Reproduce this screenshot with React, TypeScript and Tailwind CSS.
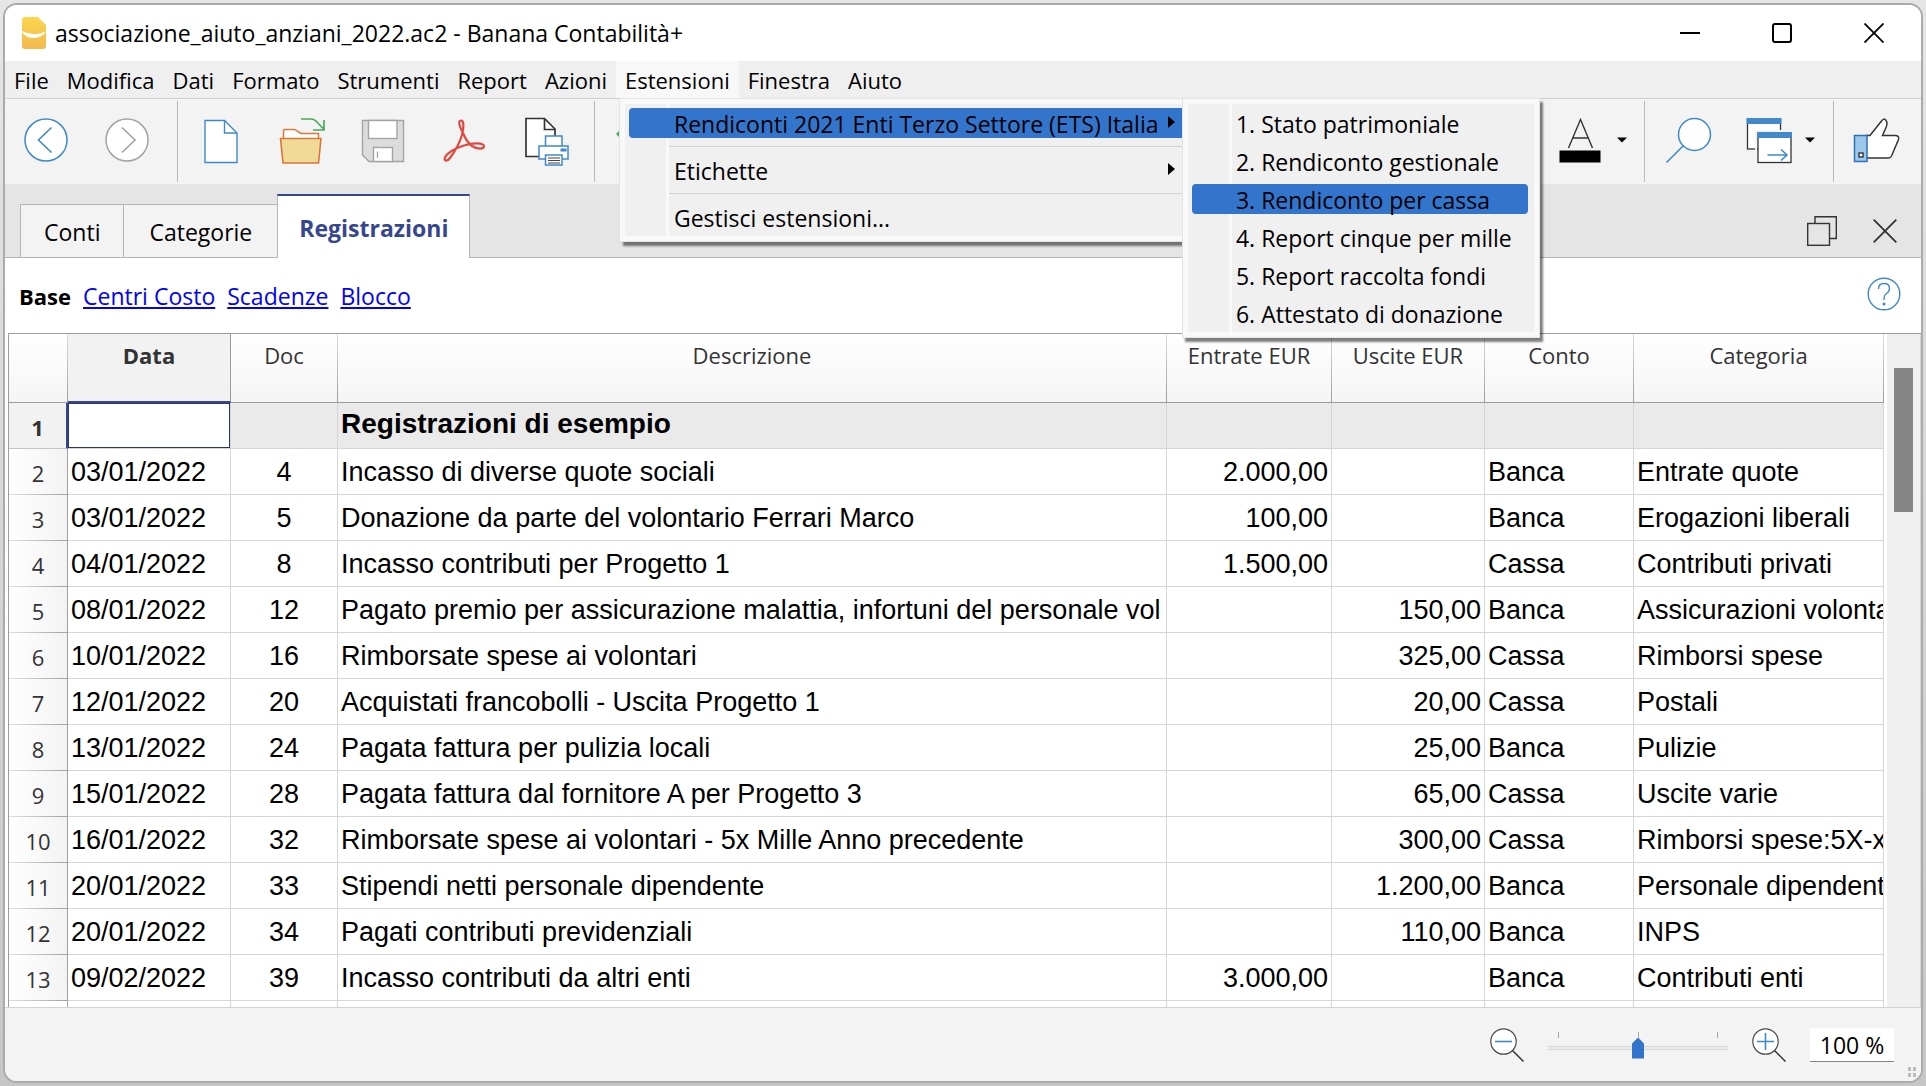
import React from "react";

const MENUS_BEFORE = ["File", "Modifica", "Dati", "Formato", "Strumenti", "Report", "Azioni"];
const MENUS_AFTER = ["Finestra", "Aiuto"];
const REPORTS = [
  "1. Stato patrimoniale",
  "2. Rendiconto gestionale",
  "3. Rendiconto per cassa",
  "4. Report cinque per mille",
  "5. Report raccolta fondi",
  "6. Attestato di donazione",
];

type Row = [string, string, string, string, string, string, string];
const ROWS: Row[] = [
  ["03/01/2022", "4", "Incasso di diverse quote sociali", "2.000,00", "", "Banca", "Entrate quote"],
  ["03/01/2022", "5", "Donazione da parte del volontario Ferrari Marco", "100,00", "", "Banca", "Erogazioni liberali"],
  ["04/01/2022", "8", "Incasso contributi per Progetto 1", "1.500,00", "", "Cassa", "Contributi privati"],
  ["08/01/2022", "12", "Pagato premio per assicurazione malattia, infortuni del personale vol", "", "150,00", "Banca", "Assicurazioni volonta"],
  ["10/01/2022", "16", "Rimborsate spese ai volontari", "", "325,00", "Cassa", "Rimborsi spese"],
  ["12/01/2022", "20", "Acquistati francobolli - Uscita Progetto 1", "", "20,00", "Cassa", "Postali"],
  ["13/01/2022", "24", "Pagata fattura per pulizia locali", "", "25,00", "Banca", "Pulizie"],
  ["15/01/2022", "28", "Pagata fattura dal fornitore A per Progetto 3", "", "65,00", "Cassa", "Uscite varie"],
  ["16/01/2022", "32", "Rimborsate spese ai volontari - 5x Mille Anno precedente", "", "300,00", "Cassa", "Rimborsi spese:5X-x"],
  ["20/01/2022", "33", "Stipendi netti personale dipendente", "", "1.200,00", "Banca", "Personale dipendent"],
  ["20/01/2022", "34", "Pagati contributi previdenziali", "", "110,00", "Banca", "INPS"],
  ["09/02/2022", "39", "Incasso contributi da altri enti", "3.000,00", "", "Banca", "Contributi enti"],
];

const ALIGN = ["text-left", "text-center", "text-left", "text-right", "text-right", "text-left", "text-left"];

function Caret() {
  return (
    <svg width="10" height="6" viewBox="0 0 10 6" aria-hidden="true">
      <path d="M0 0.5H10L5 5.5Z" fill="#000" />
    </svg>
  );
}

function ToolButton({ label, caret, children }: { label: string; caret?: boolean; children: React.ReactNode }) {
  return (
    <button type="button" aria-label={label} className="flex items-center gap-[14px] pb-[3px]">
      <svg width="44" height="44" viewBox="0 0 44 44" fill="none" className="shrink-0 overflow-visible">
        {children}
      </svg>
      {caret && <Caret />}
    </button>
  );
}

function TitleBar() {
  return (
    <header className="flex h-14 shrink-0 items-center bg-white pr-px pl-[17px]">
      <svg width="24" height="32" viewBox="0 0 24 32" className="shrink-0" aria-hidden="true">
        <defs>
          <linearGradient id="doc" x1="0" y1="0" x2="0" y2="1">
            <stop offset="0" stopColor="#fbd64f" />
            <stop offset="1" stopColor="#f2b94f" />
          </linearGradient>
        </defs>
        <path d="M3 0H16L24 8V29Q24 32 21 32H3Q0 32 0 29V3Q0 0 3 0Z" fill="url(#doc)" />
        <path d="M0 14Q12 20 24 14.500Q20 21 12 21Q4 21 0 15Z" fill="#fff" />
      </svg>
      <h1 className="ml-[9px] min-w-0 flex-1 truncate text-[23px] leading-8">
        associazione_aiuto_anziani_2022.ac2 - Banana Contabilità+
      </h1>
      <button type="button" aria-label="Riduci a icona" className="flex h-full w-[92px] items-center justify-center">
        <svg width="20" height="20" viewBox="0 0 20 20">
          <path d="M0 10H20" stroke="#000" strokeWidth="2" />
        </svg>
      </button>
      <button type="button" aria-label="Ingrandisci" className="flex h-full w-[92px] items-center justify-center">
        <svg width="20" height="20" viewBox="0 0 20 20">
          <rect x="1" y="1" width="18" height="18" rx="2" fill="none" stroke="#000" strokeWidth="2" />
        </svg>
      </button>
      <button type="button" aria-label="Chiudi" className="flex h-full w-[92px] items-center justify-center">
        <svg width="20" height="20" viewBox="0 0 20 20">
          <path d="M0.500 0.500L19.500 19.500M19.500 0.500L0.500 19.500" stroke="#000" strokeWidth="1.800" />
        </svg>
      </button>
    </header>
  );
}

function MenuArrow() {
  return (
    <svg width="7" height="12" viewBox="0 0 7 12" className="mb-1" aria-hidden="true">
      <path d="M0 0L7 6L0 12Z" fill="#000" />
    </svg>
  );
}

function MenuSeparator() {
  return (
    <div role="separator" className="flex h-[9px] items-center pl-11">
      <div className="h-px w-full bg-[#d2d2d2]" />
    </div>
  );
}

function ExtensionsMenu() {
  return (
    <div
      role="menu"
      aria-label="Estensioni"
      className="absolute top-full left-[3px] z-10 w-[572px] border border-[#e3e3e3] bg-[#f9f9f9] p-[5px] text-[23px] leading-7 shadow-[4px_4px_2px_rgba(0,0,0,0.5)]"
    >
      <div className="bg-[linear-gradient(to_right,#f0f0f0_41px,#f9f9f9_41px,#f9f9f9_44px,#f0f0f0_44px)]">
        <div className="py-1 pl-1">
          <button role="menuitem" type="button" className="flex w-full items-center justify-between rounded-l bg-[#3375cd] pt-[2px] pr-[10px] pl-[45px]">
            Rendiconti 2021 Enti Terzo Settore (ETS) Italia
            <MenuArrow />
          </button>
        </div>
        <MenuSeparator />
        <div className="py-1 pl-1">
          <button role="menuitem" type="button" className="flex w-full items-center justify-between pt-[2px] pr-[10px] pl-[45px]">
            Etichette
            <MenuArrow />
          </button>
        </div>
        <MenuSeparator />
        <div className="py-1 pl-1">
          <button role="menuitem" type="button" className="block w-full pt-[2px] pl-[45px] text-left">
            Gestisci estensioni...
          </button>
        </div>
      </div>
      <div
        role="menu"
        aria-label="Rendiconti 2021 Enti Terzo Settore (ETS) Italia"
        className="absolute -top-px left-[562px] w-[358px] border border-[#e3e3e3] bg-[#f9f9f9] p-[5px] shadow-[3px_4px_2px_rgba(0,0,0,0.5)]"
      >
        <div className="bg-[linear-gradient(to_right,#f0f0f0_41px,#f9f9f9_41px,#f9f9f9_44px,#f0f0f0_44px)]">
          {REPORTS.map((name, i) => (
            <div key={name} className="py-1 pr-[6px] pl-1">
              <button
                role="menuitem"
                type="button"
                className={`block w-full rounded pt-[2px] pl-[44px] text-left whitespace-nowrap ${i === 2 ? "bg-[#3375cd]" : ""}`}
              >
                {name}
              </button>
            </div>
          ))}
        </div>
      </div>
    </div>
  );
}

function MenuBar() {
  return (
    <nav className="flex h-[38px] shrink-0 border-b border-[#cfcfcf] bg-[#efefef] text-[22px] leading-[39px]">
      {MENUS_BEFORE.map((name) => (
        <button key={name} type="button" className="px-[9px]">
          {name}
        </button>
      ))}
      <div className="relative bg-[#f8f8f8]">
        <button type="button" aria-haspopup="menu" aria-expanded="true" className="h-full px-[9px]">
          Estensioni
        </button>
        <ExtensionsMenu />
      </div>
      {MENUS_AFTER.map((name) => (
        <button key={name} type="button" className="px-[9px]">
          {name}
        </button>
      ))}
    </nav>
  );
}

function ToolBar() {
  const divider = "h-[81px] w-px bg-[#b9b9b9]";
  return (
    <div role="toolbar" aria-label="Strumenti" className="flex h-[85px] shrink-0 items-center bg-[#f3f3f3]">
      <div className="flex gap-[37px] pr-7 pl-[19px]">
        <ToolButton label="Indietro">
          <circle cx="22" cy="22" r="21" fill="#fff" stroke="#3f89ca" strokeWidth="1.500" />
          <path d="M27.500 9.500L14.500 22L27.500 34.500" stroke="#3f89ca" strokeWidth="1.600" />
        </ToolButton>
        <ToolButton label="Avanti">
          <circle cx="22" cy="22" r="21" fill="#fff" stroke="#a3a3a3" strokeWidth="1.500" />
          <path d="M17 9.500L30 22L17 34.500" stroke="#a3a3a3" strokeWidth="1.600" />
        </ToolButton>
      </div>
      <div className={divider} />
      <div className="flex gap-[37px] pr-[27px] pl-[21px]">
        <ToolButton label="Nuovo">
          <path d="M6 2.500H25.500L38 15V44.500H6Z" fill="#fff" stroke="#3f89ca" strokeWidth="1.400" />
          <path d="M25.500 2.500V15H38" stroke="#3f89ca" strokeWidth="1.400" />
        </ToolButton>
        <ToolButton label="Apri">
          <path d="M3.500 20V12.500Q3.500 11.500 4.500 11.500H14Q15.500 11.500 17 13L21 15.500H38.500V20" fill="#fff" stroke="#d9783a" strokeWidth="1.500" />
          <path d="M0.500 20.500H41L38.500 45H3Z" fill="#f1da97" stroke="#d9783a" strokeWidth="1.600" />
          <path d="M21 1H31Q34 1 36 3L44 11.500M44 2V12H33" stroke="#48a85c" strokeWidth="1.700" />
        </ToolButton>
        <ToolButton label="Salva">
          <path d="M1.500 2.500H42.500V43.500H8L1.500 37Z" fill="#dcdcdc" stroke="#a3a3a3" strokeWidth="1.400" />
          <rect x="7.500" y="2.500" width="28.500" height="18" fill="#fff" stroke="#a3a3a3" strokeWidth="1.400" />
          <rect x="12.500" y="29.500" width="19" height="14" fill="#fff" stroke="#a3a3a3" strokeWidth="1.400" />
          <path d="M16.500 33.500V40" stroke="#a3a3a3" strokeWidth="1.300" />
        </ToolButton>
        <ToolButton label="Esporta in PDF">
          <path
            d="M21 15C17 8 16 2.500 19 2.500C22 2.500 22 9 20 17C17 27 11 36 8 40C5.500 43.500 1.500 43.500 3 39.500C4.500 35 14 30 22 27.500C30 25 41 24 42 28C42.500 31.500 35 31.500 30 28C26 25 23 20 21 15Z"
            stroke="#e04840"
            strokeWidth="2.200"
            strokeLinejoin="round"
          />
        </ToolButton>
        <ToolButton label="Stampa">
          <path d="M3 0.500H21.500L32 11V38.500H3Z" fill="#fff" stroke="#333" strokeWidth="1.700" />
          <path d="M21.500 0.500V11.500H32" stroke="#333" strokeWidth="1.700" />
          <rect x="22.500" y="18" width="16.500" height="11" fill="#fff" stroke="#3f89ca" strokeWidth="1.500" />
          <rect x="16" y="28" width="29" height="13" fill="#fff" stroke="#3f89ca" strokeWidth="1.500" />
          <rect x="37.500" y="30.500" width="6" height="3" fill="#3f89ca" />
          <rect x="22.500" y="37" width="16.500" height="10" fill="#fff" stroke="#3f89ca" strokeWidth="1.500" />
          <path d="M25 40H37M25 42.500H37M25 45H37" stroke="#444" strokeWidth="1.200" />
        </ToolButton>
      </div>
      <div className={divider} />
      <div className="pl-[21px]">
        <ToolButton label="Annulla">
          <path d="M0 16L8 8V24Z" fill="#48a85c" />
          <path d="M4 16H26Q38 16 38 28" stroke="#48a85c" strokeWidth="2" />
        </ToolButton>
      </div>
      <div className="ml-auto flex pr-[17px]">
        <ToolButton label="Colore del testo" caret>
          <path d="M9.500 30L21.500 1.500L33.500 30M14 20H29" stroke="#333" strokeWidth="1.400" />
          <rect x="0.500" y="32.500" width="41" height="12" fill="#000" />
        </ToolButton>
      </div>
      <div className={divider} />
      <div className="flex gap-[37px] pr-[18px] pl-[21px]">
        <ToolButton label="Cerca">
          <circle cx="28.500" cy="16.500" r="16" fill="#fff" stroke="#3f89ca" strokeWidth="1.500" />
          <path d="M17 28L0.500 44.500" stroke="#3f89ca" strokeWidth="1.600" />
        </ToolButton>
        <ToolButton label="Finestre" caret>
          <rect x="0.500" y="1" width="33" height="30" fill="#fff" stroke="#333" strokeWidth="1.300" />
          <rect x="-0.500" y="0" width="35" height="6" fill="#4189c9" />
          <path d="M9 33V13H36" stroke="#f3f3f3" strokeWidth="2" />
          <rect x="11" y="15" width="33" height="29.500" fill="#fff" stroke="#333" strokeWidth="1.300" />
          <rect x="10.500" y="14" width="34.500" height="6" fill="#4189c9" />
          <path d="M20.500 37H40M34 31.500L40 37L34 42.500" stroke="#3f89ca" strokeWidth="1.600" />
        </ToolButton>
      </div>
      <div className={divider} />
      <div className="pr-[23px] pl-5">
        <ToolButton label="Mi piace">
          <path
            d="M12 17.500H16L27.500 3Q30 -0.500 32 2.500Q34 5 32 9.500L28.500 17.500H41Q45.500 17.500 44.500 21.500L37.500 38Q36.500 40 34.500 40H12Z"
            fill="#fff"
            stroke="#333"
            strokeWidth="1.500"
          />
          <rect x="0.500" y="17.500" width="12.500" height="26" fill="#9cc8ec" stroke="#2f6fb5" strokeWidth="1.500" />
          <rect x="5" y="35" width="4" height="4" fill="#fff" stroke="#333" strokeWidth="1.400" />
        </ToolButton>
      </div>
    </div>
  );
}

function TabBar() {
  return (
    <div className="flex h-[74px] shrink-0 items-end bg-[#e5e5e5]">
      <div role="tablist" className="flex items-end self-stretch">
        <div className="w-[15px] self-stretch border-b border-[#b4b4b4]" />
        <button
          role="tab"
          type="button"
          aria-selected="false"
          className="h-[54px] border border-[#b4b4b4] bg-[#f3f3f3] px-[23px] pt-[2px] text-[23px]"
        >
          Conti
        </button>
        <button
          role="tab"
          type="button"
          aria-selected="false"
          className="h-[54px] border-y border-[#b4b4b4] bg-[#f3f3f3] px-[25px] pt-[2px] text-[23px]"
        >
          Categorie
        </button>
        <button
          role="tab"
          type="button"
          aria-selected="true"
          className="h-16 border-x border-t-2 border-x-[#b4b4b4] border-t-[#37478f] bg-white px-[21px] pt-[2px] text-[23px] font-bold text-[#37478f]"
        >
          Registrazioni
        </button>
      </div>
      <div className="flex flex-1 items-center justify-end gap-9 self-stretch border-b border-[#b4b4b4] pr-6 pt-5">
        <button type="button" aria-label="Ripristina finestra">
          <svg width="30" height="30" viewBox="0 0 30 30" fill="none" stroke="#333" strokeWidth="1.400">
            <path d="M8 7.500V0.700H29.300V22.500H22.500" />
            <rect x="0.700" y="7.500" width="21.800" height="21.800" />
          </svg>
        </button>
        <button type="button" aria-label="Chiudi tabella">
          <svg width="24" height="24" viewBox="0 0 24 24">
            <path d="M0.700 0.700L23.300 23.300M23.300 0.700L0.700 23.300" stroke="#333" strokeWidth="1.800" />
          </svg>
        </button>
      </div>
    </div>
  );
}

function ViewBar() {
  return (
    <div className="flex h-[75px] shrink-0 items-center gap-3 pt-[2px] pr-5 pl-[14px] text-[23px]">
      <strong className="text-[22px]">Base</strong>
      <a href="#centri" className="text-[#0000ff] underline">Centri Costo</a>
      <a href="#scadenze" className="text-[#0000ff] underline">Scadenze</a>
      <a href="#blocco" className="text-[#0000ff] underline">Blocco</a>
      <button type="button" aria-label="Aiuto" className="ml-auto pb-[5px]">
        <svg width="34" height="34" viewBox="0 0 34 34" fill="none" stroke="#3f89ca" strokeWidth="1.400">
          <circle cx="17" cy="17" r="15.800" />
          <path d="M11.500 12Q11.500 6.500 17 6.500Q22.500 6.500 22.500 11.500Q22.500 14.500 19.500 16.500Q17 18.200 17 21V23" />
          <circle cx="17" cy="27" r="0.800" fill="#3f89ca" />
        </svg>
      </button>
    </div>
  );
}

const HEAD =
  "h-[69px] border-r border-b bg-linear-to-b from-white to-[#f5f5f5] [border-image:linear-gradient(to_bottom,#dedede,#9c9c9c)_1] pt-[6px] align-top font-normal leading-[30px] text-[#333]";
const ROW_HEAD =
  "border-r border-b bg-linear-to-r from-white to-[#f3f3f3] [border-image:linear-gradient(to_right,#e2e2e2,#a0a0a0)_1] pt-[2px] text-center font-['Open_Sans',sans-serif] text-[22px] font-normal text-[#333]";
const CELL = "h-[46px] overflow-hidden border-r border-b border-[#d6d6d6] px-[3px] whitespace-nowrap";

function Grid() {
  return (
    <div className="ml-[3px] flex min-h-0 flex-1 border-t border-l border-[#9c9c9c]">
      <div className="min-w-0 flex-1 overflow-hidden">
        <table className="w-full table-fixed border-separate border-spacing-0">
          <colgroup>
            <col className="w-[59px]" />
            <col className="w-[163px]" />
            <col className="w-[107px]" />
            <col />
            <col className="w-[165px]" />
            <col className="w-[153px]" />
            <col className="w-[149px]" />
            <col className="w-[250px]" />
          </colgroup>
          <thead className="text-[22px]">
            <tr>
              <td className={HEAD} />
              <th scope="col" className="h-[69px] border-r border-b-2 border-r-[#9c9c9c] border-b-[#37478f] bg-[#f2f2f2] pt-[6px] align-top leading-[30px] font-bold text-[#333]">
                Data
              </th>
              <th scope="col" className={HEAD}>Doc</th>
              <th scope="col" className={HEAD}>Descrizione</th>
              <th scope="col" className={HEAD}>Entrate EUR</th>
              <th scope="col" className={HEAD}>Uscite EUR</th>
              <th scope="col" className={HEAD}>Conto</th>
              <th scope="col" className={HEAD}>Categoria</th>
            </tr>
          </thead>
          <tbody className="font-['Liberation_Sans',Arial,sans-serif] text-[27px] leading-9">
            <tr className="bg-[#eaeaea]">
              <th
                scope="row"
                className="border-r-2 border-b border-r-[#37478f] border-b-[#c4c4c4] bg-[#f2f2f2] pt-[2px] text-center font-['Open_Sans',sans-serif] text-[22px] font-bold text-[#333]"
              >
                1
              </th>
              <td className="h-[46px] border-r border-b border-[#d6d6d6] p-0">
                <input
                  aria-label="Data registrazione 1"
                  className="block h-[45px] w-full border border-[#2a3568] bg-white px-[3px] outline-none"
                />
              </td>
              <td className={CELL} />
              <td className={`${CELL} pb-[3px] text-[28px] font-bold`}>Registrazioni di esempio</td>
              <td className={CELL} />
              <td className={CELL} />
              <td className={CELL} />
              <td className={CELL} />
            </tr>
            {ROWS.map((row, r) => (
              <tr key={r}>
                <th scope="row" className={ROW_HEAD}>{r + 2}</th>
                {row.map((value, c) => (
                  <td key={c} className={`${CELL} ${ALIGN[c]}`}>{value}</td>
                ))}
              </tr>
            ))}
            <tr>
              <td className="border-r border-[#a8a8a8]" />
              {ALIGN.map((_, c) => (
                <td key={c} className={CELL} />
              ))}
            </tr>
          </tbody>
        </table>
      </div>
      <div className="ml-[3px] w-[34px] shrink-0 border-r border-[#d6d6d6] bg-[#f0f0f0] pt-[34px] pl-[7px]">
        <div className="h-36 w-[19px] bg-[#868686]" />
      </div>
    </div>
  );
}

function Magnifier({ plus }: { plus?: boolean }) {
  return (
    <svg width="34" height="34" viewBox="0 0 34 34" fill="none" className="shrink-0">
      <circle cx="13.500" cy="13.500" r="12.700" fill="#fff" stroke="#4a4a4a" strokeWidth="1.200" />
      <path d="M22.500 22.500L33.500 33.500" stroke="#333" strokeWidth="1.500" />
      <path d={plus ? "M5 13.500H22M13.500 5V22" : "M5 13.500H22"} stroke="#3f89ca" strokeWidth="1.600" />
    </svg>
  );
}

function StatusBar() {
  return (
    <footer className="relative flex h-[74px] shrink-0 items-center justify-end gap-6 border-t border-[#d2d2d2] bg-[#f3f3f3] pr-[27px]">
      <button type="button" aria-label="Riduci zoom">
        <Magnifier />
      </button>
      <div className="flex h-[34px] w-[180px] flex-col pt-1">
        <div className="flex justify-between px-[10px]">
          <span className="h-[6px] w-px bg-[#a8a99c]" />
          <span className="h-[6px] w-px bg-[#a8a99c]" />
          <span className="h-[6px] w-px bg-[#a8a99c]" />
        </div>
        <input
          type="range"
          aria-label="Zoom"
          defaultValue="50"
          className="block h-[21px] w-full appearance-none bg-[linear-gradient(to_bottom,transparent_8px,#d4d8d6_8px,#d4d8d6_9px,#e6e9e8_9px,#e6e9e8_11px,#d4d8d6_11px,#d4d8d6_12px,transparent_12px)] [&::-webkit-slider-thumb]:h-[21px] [&::-webkit-slider-thumb]:w-3 [&::-webkit-slider-thumb]:appearance-none [&::-webkit-slider-thumb]:bg-[#3375cd] [&::-webkit-slider-thumb]:[clip-path:polygon(50%_0,100%_28%,100%_100%,0_100%,0_28%)]"
        />
      </div>
      <button type="button" aria-label="Aumenta zoom">
        <Magnifier plus />
      </button>
      <input
        aria-label="Percentuale di zoom"
        defaultValue="100 %"
        className="h-[34px] w-[84px] border-b border-[#868686] bg-white pt-[2px] text-center text-[23px] outline-none"
      />
      <div className="absolute right-[5px] bottom-1 grid grid-cols-2 gap-[2px]" aria-hidden="true">
        <span className="h-1 w-[3px] bg-[#bdbdbd]" />
        <span className="h-1 w-[3px] bg-[#bdbdbd]" />
        <span className="h-1 w-[3px] bg-[#bdbdbd]" />
        <span className="h-1 w-[3px] bg-[#bdbdbd]" />
      </div>
    </footer>
  );
}

export default function App() {
  return (
    <div className="h-screen bg-linear-to-b from-[#e6e6e6] to-[#c6c6c6] p-[3px] font-['Open_Sans','Noto_Sans',sans-serif] text-black">
      <div className="flex h-full flex-col overflow-hidden rounded-[14px] border-2 border-[#ababab] bg-white">
        <TitleBar />
        <MenuBar />
        <ToolBar />
        <TabBar />
        <ViewBar />
        <Grid />
        <StatusBar />
      </div>
    </div>
  );
}
